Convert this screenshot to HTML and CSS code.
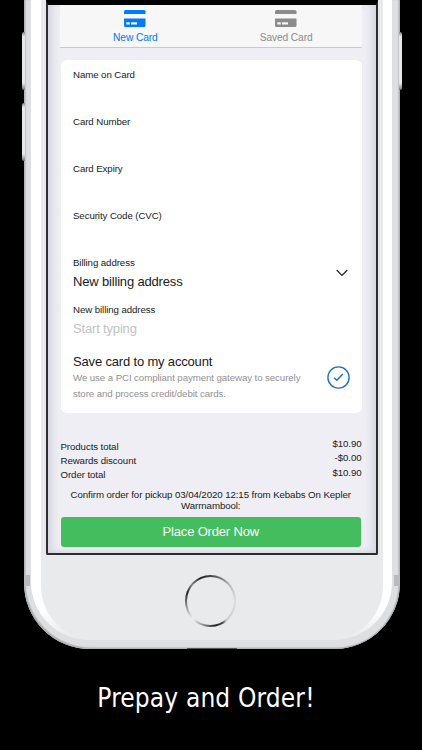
FILE: index.html
```
<!DOCTYPE html>
<html lang="en">
<head>
    <meta charset="UTF-8">
    <meta name="viewport" content="width=device-width, initial-scale=1.0">
    <title>Prepay and Order</title>
    <link rel="stylesheet" href="styles.css">
</head>
<body>
    <div class="phone">
        <span class="side-button volume-up"></span>
        <span class="side-button volume-down"></span>
        <span class="side-button power"></span>
        <span class="antenna"></span>
        <span class="port"></span>
        <div class="rim">
            <div class="face">
                <div class="screen">
                    <div class="tabs">
                        <div class="tab active">
                            <svg width="22" height="18" viewBox="0 0 22 18">
                                <path fill="currentColor" d="M0 4V1.5Q0 0 1.5 0h18.500Q21.500 0 21.500 1.500V4z"/>
                                <path fill="currentColor" fill-rule="evenodd" d="M0 8.500h21.500v7q0 1.500-1.500 1.500h-18.500Q0 17 0 15.500zM2.300 12.300v2.200h3.500v-2.200zM7 12.300v2.200h6v-2.200z"/>
                            </svg>
                            <span>New Card</span>
                        </div>
                        <div class="tab">
                            <svg width="22" height="18" viewBox="0 0 22 18">
                                <path fill="currentColor" d="M0 4V1.5Q0 0 1.5 0h18.500Q21.500 0 21.500 1.500V4z"/>
                                <path fill="currentColor" fill-rule="evenodd" d="M0 8.500h21.500v7q0 1.500-1.500 1.500h-18.500Q0 17 0 15.500zM2.300 12.300v2.200h3.500v-2.200zM7 12.300v2.200h6v-2.200z"/>
                            </svg>
                            <span>Saved Card</span>
                        </div>
                    </div>

                    <div class="card">
                        <div class="field"><label>Name on Card</label></div>
                        <div class="field"><label>Card Number</label></div>
                        <div class="field"><label>Card Expiry</label></div>
                        <div class="field"><label>Security Code (CVC)</label></div>
                        <div class="field select">
                            <div>
                                <label>Billing address</label>
                                <div class="value">New billing address</div>
                            </div>
                            <svg width="12" height="8" viewBox="0 0 12 8">
                                <path d="M.7 1 6 6.300 11.300 1" fill="none" stroke="#222" stroke-width="1.200"/>
                            </svg>
                        </div>
                        <div class="field">
                            <label>New billing address</label>
                            <div class="value placeholder">Start typing</div>
                        </div>
                        <div class="save">
                            <div>
                                <div class="value">Save card to my account</div>
                                <p>We use a PCI compliant payment gateway to securely<br>store and process credit/debit cards.</p>
                            </div>
                            <svg width="23" height="23" viewBox="0 0 23 23" fill="none" stroke="#1f6fd0">
                                <circle cx="11.500" cy="11.500" r="10.600" stroke-width="1.400"/>
                                <path d="M7 11.700 9.900 14.300 15.800 7.900" stroke-width="1.500"/>
                            </svg>
                        </div>
                    </div>

                    <div class="totals">
                        <div class="names">
                            <div>Products total</div>
                            <div>Rewards discount</div>
                            <div>Order total</div>
                        </div>
                        <div class="amounts">
                            <div>$10.90</div>
                            <div>-$0.00</div>
                            <div>$10.90</div>
                        </div>
                    </div>
                    <p class="confirm">Confirm order for pickup 03/04/2020 12:15 from Kebabs On Kepler<br>Warrnambool:</p>
                    <button class="place-order">Place Order Now</button>
                </div>
                <div class="home"></div>
            </div>
        </div>
    </div>
    <h1>Prepay and Order!</h1>
</body>
</html>
```
FILE: styles.css
```
* {
    box-sizing: border-box;
}

body {
    margin: 0;
    height: 750px;
    overflow: hidden;
    background: #000;
    font-family: "Liberation Sans", Arial, sans-serif;
    font-size: 9.7px;
    letter-spacing: -0.09px;
    color: #1a1a1c;
}

p {
    margin: 0;
}

svg {
    display: block;
}

/* phone body */
.phone {
    position: relative;
    width: 376px;
    height: 649px;
    margin-left: 23.5px;
    padding: 0 7.5px 9px;
    border-radius: 0 0 66px 66px;
    background: #dedfe1;
    box-shadow: inset 1.5px -1.5px 1px #aeb0b2, inset -1.5px 0 1px #aeb0b2;
}

.rim {
    height: 640px;
    padding: 0 9.5px;
    border-radius: 0 0 58px 58px;
    background: linear-gradient(#fff 610px, #e9eaec 638px);
}

.face {
    height: 640px;
    padding: 0 5px;
    border-radius: 0 0 54px 54px;
    background: #e9eaec;
}

.side-button {
    position: absolute;
    top: 32px;
    left: -2px;
    width: 3px;
    height: 58px;
    border-radius: 2px 0 0 2px;
    background: linear-gradient(#888, #e8e8e8 8%, #e8e8e8 88%, #777);
}

.volume-down {
    top: 103px;
}

.power {
    left: 375px;
    border-radius: 0 2px 2px 0;
}

.antenna {
    position: absolute;
    top: 575px;
    left: 0;
    width: 376px;
    height: 11px;
    border: solid #b9babb;
    border-width: 0 6px;
}

.port {
    position: absolute;
    bottom: 0;
    left: 163px;
    width: 50px;
    height: 1.5px;
    background: #555;
}

/* screen */
.screen {
    height: 555px;
    border: 2.5px solid #2d2d31;
    border-top: 5px solid #000;
    border-radius: 0 0 2px 2px;
    padding: 0 14px 0 12.5px;
    background: #efeef4;
    box-shadow: inset 8px 0 8px -4px #d4d4dd, inset -8px 0 8px -4px #d4d4dd, inset 0 -5px 5px -4px #d4d4dd;
}

.tabs {
    display: flex;
    height: 43px;
    background: #f7f7f7;
    border-bottom: 1px solid #cacacc;
}

.tab {
    flex: 1;
    display: flex;
    flex-direction: column;
    align-items: center;
    padding-top: 5px;
    color: #8b8b8b;
}

.tab span {
    margin-top: 3px;
    font-size: 10.2px;
    line-height: 13px;
}

.tab.active {
    color: #007aff;
}

.card {
    height: 353px;
    margin: 12px 0 0 0.5px;
    padding: 8px 12px 0 12.5px;
    border-radius: 6px;
    background: #fff;
}

.field {
    height: 47px;
}

.field label {
    display: block;
    line-height: 13px;
}

.value {
    font-size: 13px;
    line-height: 16px;
    letter-spacing: -0.17px;
    margin-top: 5px;
}

.placeholder {
    color: #c2c2c4;
}

.select {
    display: flex;
    justify-content: space-between;
}

.select svg {
    margin: 13px 2px 0 0;
}

.save {
    display: flex;
    justify-content: space-between;
}

.save .value {
    margin-top: 4px;
}

.save p {
    line-height: 16px;
    color: #929294;
}

.save svg {
    margin-top: 16px;
}

.totals {
    display: flex;
    justify-content: space-between;
    margin: 24px 0 0 0.5px;
    line-height: 14.4px;
}

.names {
    padding-top: 2.5px;
}

.amounts {
    text-align: right;
}

.confirm {
    margin-top: 6px;
    text-align: center;
    line-height: 11px;
}

.place-order {
    display: block;
    width: 300px;
    height: 30px;
    margin: 6px auto 0;
    padding: 0;
    border: none;
    border-radius: 3px;
    background: #43bd5d;
    color: #fff;
    font: 13px "Liberation Sans", Arial, sans-serif;
    letter-spacing: -0.17px;
}

.home {
    width: 51px;
    height: 52px;
    margin: 20px 0 0 139.5px;
    border: 2px solid transparent;
    border-radius: 50%;
    background:
        linear-gradient(#e9eaec, #e9eaec) padding-box,
        conic-gradient(#444, #777 25deg, #bbb 50deg, #ddd 90deg, #ccc 140deg, #444 152deg, #222 170deg, #888 195deg, #f4f4f4 225deg, #888 260deg, #222 290deg, #888 312deg, #222 335deg, #444) border-box;
}

h1 {
    margin: 29.5px 0 0;
    padding-right: 10px;
    text-align: center;
    color: #fff;
    font: 26px/38px "DejaVu Sans Condensed", "DejaVu Sans", sans-serif;
    letter-spacing: 0.15px;
}
```
